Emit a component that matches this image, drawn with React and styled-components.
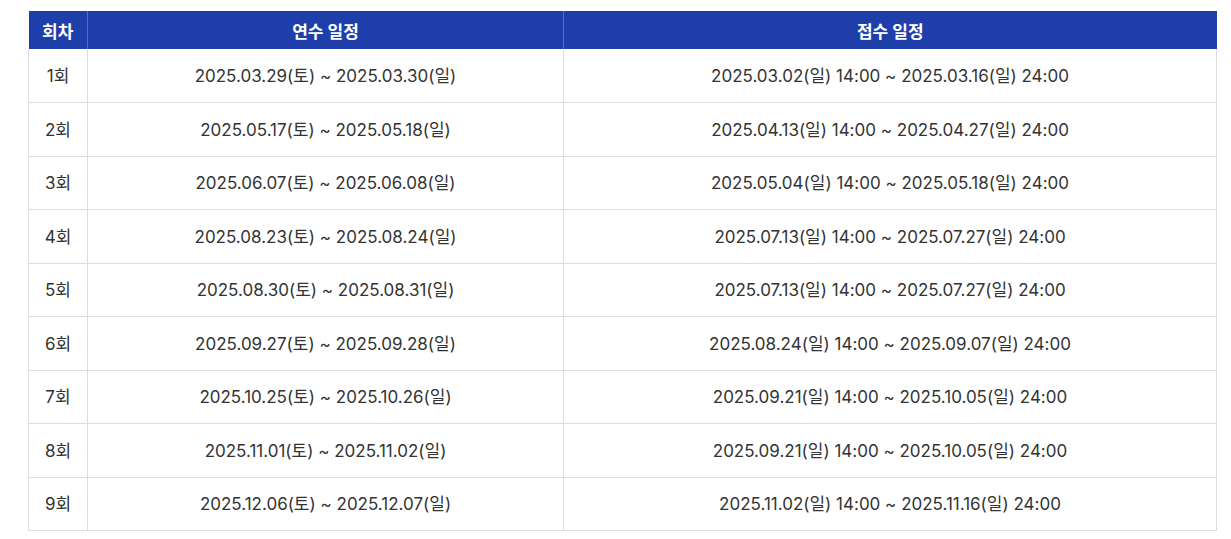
import React from "react";
import styled, { createGlobalStyle } from "styled-components";

const GlobalStyle = createGlobalStyle`
  body {
    margin: 0;
    background: #ffffff;
    font-family: Inter, "Noto Sans CJK KR", sans-serif;
  }
`;

const Page = styled.div`
  padding: 11px 14px 0 28px;
`;

const Table = styled.table`
  width: 1189px;
  border-collapse: collapse;
  table-layout: fixed;
  color: #333333;
  font-size: 17px;
`;

const HeadCell = styled.th`
  background: #1e3faa;
  color: #ffffff;
  font-weight: 700;
  height: 38px;
  padding: 0;
  text-align: center;
  border-left: 1px solid #4d6fd6;
  &:first-child {
    border-left: none;
  }
`;

const Row = styled.tr`
  height: 53.5px;
  border-bottom: 1px solid #dddddd;
`;

const Cell = styled.td`
  padding: 0 0 2px;
  text-align: center;
  border-left: 1px solid #dddddd;
  border-right: 1px solid #dddddd;
  font-weight: 400;
`;

const rows = [
  ["1회", "2025.03.29(토) ~ 2025.03.30(일)", "2025.03.02(일) 14:00 ~ 2025.03.16(일) 24:00"],
  ["2회", "2025.05.17(토) ~ 2025.05.18(일)", "2025.04.13(일) 14:00 ~ 2025.04.27(일) 24:00"],
  ["3회", "2025.06.07(토) ~ 2025.06.08(일)", "2025.05.04(일) 14:00 ~ 2025.05.18(일) 24:00"],
  ["4회", "2025.08.23(토) ~ 2025.08.24(일)", "2025.07.13(일) 14:00 ~ 2025.07.27(일) 24:00"],
  ["5회", "2025.08.30(토) ~ 2025.08.31(일)", "2025.07.13(일) 14:00 ~ 2025.07.27(일) 24:00"],
  ["6회", "2025.09.27(토) ~ 2025.09.28(일)", "2025.08.24(일) 14:00 ~ 2025.09.07(일) 24:00"],
  ["7회", "2025.10.25(토) ~ 2025.10.26(일)", "2025.09.21(일) 14:00 ~ 2025.10.05(일) 24:00"],
  ["8회", "2025.11.01(토) ~ 2025.11.02(일)", "2025.09.21(일) 14:00 ~ 2025.10.05(일) 24:00"],
  ["9회", "2025.12.06(토) ~ 2025.12.07(일)", "2025.11.02(일) 14:00 ~ 2025.11.16(일) 24:00"],
];

const App = () => {
  return (
    <Page>
      <GlobalStyle />
      <Table>
        <colgroup>
          <col style={{ width: 59 }} />
          <col style={{ width: 476 }} />
          <col />
        </colgroup>
        <thead>
          <tr>
            <HeadCell>회차</HeadCell>
            <HeadCell>연수 일정</HeadCell>
            <HeadCell>접수 일정</HeadCell>
          </tr>
        </thead>
        <tbody>
          {rows.map((r) => (
            <Row key={r[0]}>
              <Cell>{r[0]}</Cell>
              <Cell>{r[1]}</Cell>
              <Cell>{r[2]}</Cell>
            </Row>
          ))}
        </tbody>
      </Table>
    </Page>
  );
};

export default App;
